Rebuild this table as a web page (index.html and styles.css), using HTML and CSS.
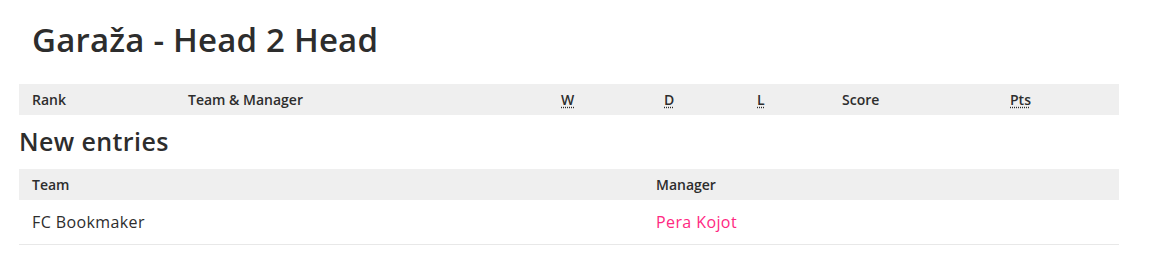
FILE: index.html
```html
<!DOCTYPE html>
<html lang="sr">
<head>
<meta charset="utf-8">
<title>Garaža - Head 2 Head</title>
<link rel="stylesheet" href="styles.css">
</head>
<body>
<main class="page">
  <h1 class="title">Garaža - Head 2 Head</h1>
  <table class="table standings">
    <thead>
      <tr>
        <th class="c-rank">Rank</th>
        <th class="c-team">Team &amp; Manager</th>
        <th class="c-w"><abbr title="Won">W</abbr></th>
        <th class="c-d"><abbr title="Drawn">D</abbr></th>
        <th class="c-l"><abbr title="Lost">L</abbr></th>
        <th class="c-score">Score</th>
        <th class="c-pts"><abbr title="Points">Pts</abbr></th>
      </tr>
    </thead>
  </table>
  <h2 class="subtitle">New entries</h2>
  <table class="table entries">
    <thead>
      <tr>
        <th class="c-eteam">Team</th>
        <th>Manager</th>
      </tr>
    </thead>
    <tbody>
      <tr>
        <td>FC Bookmaker</td>
        <td class="manager">Pera Kojot</td>
      </tr>
    </tbody>
  </table>
</main>
</body>
</html>
```

FILE: styles.css
```css
html, body {
  margin: 0;
  padding: 0;
  background: #fff;
}
body {
  font-family: "Open Sans", "Noto Sans", sans-serif;
  color: #2d2d2d;
}
.page {
  width: 1100px;
  padding: 0 0 0 19px;
}
.title {
  margin: 0;
  padding: 20px 13px 0;
  font-size: 33px;
  line-height: 40px;
  font-weight: 600;
  letter-spacing: 0.2px;
  height: 62px;
  box-sizing: border-box;
}
.table {
  width: 1100px;
  border-collapse: collapse;
  table-layout: fixed;
}
.table th {
  background: #efefef;
  text-align: left;
  font-size: 14px;
  font-weight: 600;
  height: 31px;
  padding: 0 0 0 13px;
  box-sizing: border-box;
}
.table abbr {
  text-decoration: underline dotted;
  text-underline-offset: 2px;
}
.c-rank { width: 156px; }
.c-team { width: 373px; }
.c-w { width: 103px; }
.c-d { width: 93px; }
.c-l { width: 85px; }
.c-score { width: 168px; }
.standings { margin-top: 22px; }
.subtitle {
  margin: 0;
  padding: 11px 0 0;
  height: 54px;
  box-sizing: border-box;
  font-size: 25px;
  line-height: 30px;
  font-weight: 600;
  letter-spacing: 0.4px;
}
.c-eteam { width: 624px; }
.entries td {
  font-size: 16px;
  letter-spacing: 0.4px;
  height: 44px;
  padding: 0 0 0 13px;
  border-bottom: 1px solid #e8e8e8;
}
.manager { color: #ff2882; }
```
